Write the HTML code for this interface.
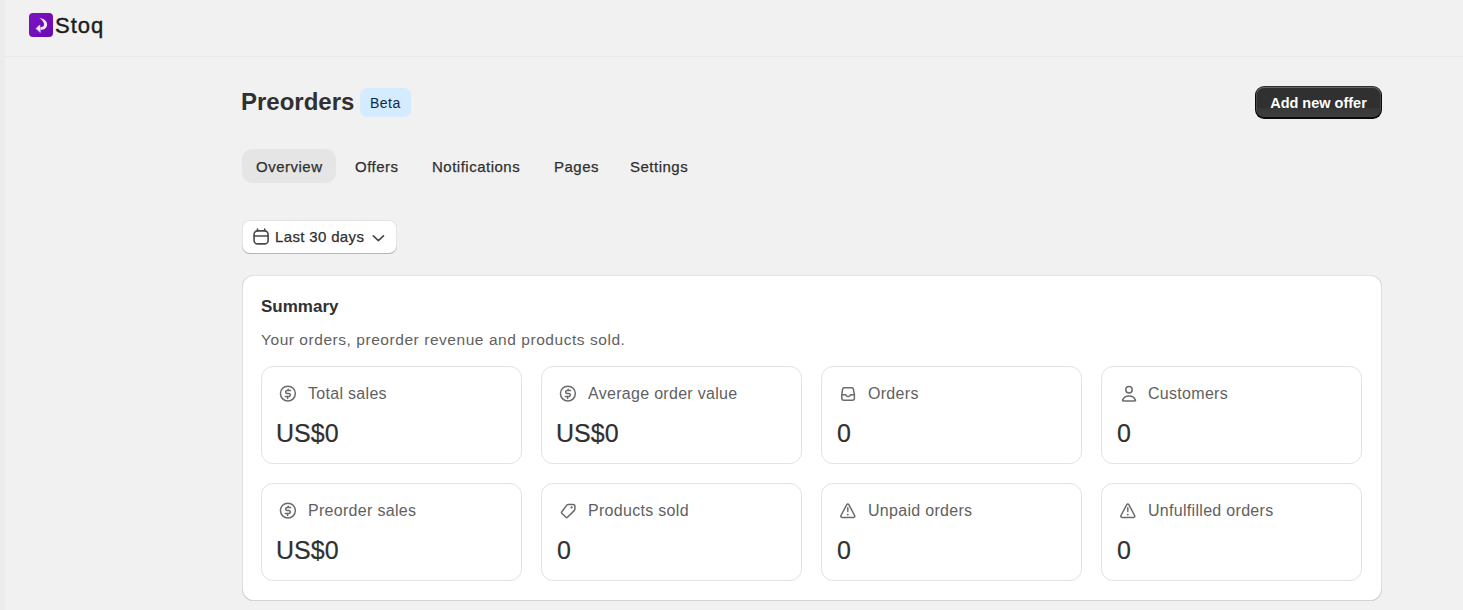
<!DOCTYPE html>
<html><head><meta charset="utf-8">
<style>
html,body{margin:0;padding:0;}
body{width:1463px;height:610px;overflow:hidden;background:#f1f1f1;position:relative;font-family:"Liberation Sans",sans-serif;color:#303030;}
.a{position:absolute;white-space:nowrap;line-height:1;}
#strip{position:absolute;left:0;top:0;width:5px;height:610px;background:#ececec;}
#sep{position:absolute;left:5px;top:56px;width:1458px;height:1px;background:#eaeaea;}
#logo{position:absolute;left:29px;top:13px;width:24px;height:24px;border-radius:4px;background:linear-gradient(135deg,#7c12c4,#6a0caf);}
#stoq{left:55px;top:15px;font-size:22px;letter-spacing:1px;color:#1c1c1c;-webkit-text-stroke:0.4px #1c1c1c;}
#title{left:241px;top:90px;font-size:24px;font-weight:bold;color:#303030;}
#beta{position:absolute;left:360px;top:88px;width:51px;height:29px;border-radius:7px;background:#d5ebff;}
#betat{left:370px;top:96px;font-size:14px;letter-spacing:0.5px;color:#0b2a45;}
#btn{position:absolute;left:1255px;top:86px;width:127px;height:33px;border-radius:9px;background:linear-gradient(180deg,rgba(255,255,255,0) 66%,rgba(255,255,255,.04) 69%,rgba(255,255,255,.08)),#303030;box-shadow:inset 0 -1px 0 1px rgba(0,0,0,.8),inset 0 0 0 1px #303030,inset 0 .5px 0 1.5px rgba(255,255,255,.25);}
#btnt{left:1255px;width:127px;text-align:center;top:96px;font-size:14.5px;font-weight:bold;color:#fff;}
#tabsel{position:absolute;left:242px;top:149px;width:94px;height:34px;border-radius:10px;background:#e5e5e5;}
.tab{top:159px;font-size:15px;letter-spacing:0.5px;color:#303030;-webkit-text-stroke:0.25px #303030;}
#date{position:absolute;left:242px;top:220px;width:155px;height:34px;border-radius:8px;background:#fff;box-shadow:inset 0 -1px 0 0 #b5b5b5,inset 0 0 0 1px rgba(0,0,0,.1);}
#datet{left:275px;top:229px;font-size:15px;letter-spacing:0.35px;color:#303030;-webkit-text-stroke:0.25px #303030;}
#card{position:absolute;left:242px;top:275px;width:1140px;height:326px;border-radius:12px;background:#fff;box-shadow:inset 0 1px 0 0 rgba(204,204,204,.5),inset 0 -1px 0 0 rgba(0,0,0,.17),inset -1px 0 0 0 rgba(0,0,0,.13),inset 1px 0 0 0 rgba(0,0,0,.13);}
#sum{left:261px;top:298px;font-size:17px;font-weight:bold;color:#303030;}
#desc{left:261px;top:332px;font-size:15.5px;letter-spacing:0.55px;color:#616161;}
.st{position:absolute;width:259px;height:96px;border:1px solid #e3e3e3;border-radius:12px;background:#fff;}
.lb{font-size:16px;letter-spacing:0.3px;color:#616161;}
.vl{font-size:25px;letter-spacing:0px;color:#303030;-webkit-text-stroke:0.2px #303030;}
svg{position:absolute;left:0;top:0;}
</style></head><body>
<div id="strip"></div>
<div id="sep"></div>
<div id="logo"></div>
<div class="a" id="stoq">Stoq</div>
<div class="a" id="title">Preorders</div>
<div id="beta"></div>
<div class="a" id="betat">Beta</div>
<div id="btn"></div>
<div class="a" id="btnt">Add new offer</div>
<div id="tabsel"></div>
<div class="a tab" style="left:256px">Overview</div>
<div class="a tab" style="left:355px">Offers</div>
<div class="a tab" style="left:432px">Notifications</div>
<div class="a tab" style="left:554px">Pages</div>
<div class="a tab" style="left:630px">Settings</div>
<div id="date"></div>
<div class="a" id="datet">Last 30 days</div>
<div id="card"></div>
<div class="a" id="sum">Summary</div>
<div class="a" id="desc">Your orders, preorder revenue and products sold.</div>

<div class="st" style="left:261px;top:366px"></div>
<div class="st" style="left:541px;top:366px"></div>
<div class="st" style="left:821px;top:366px"></div>
<div class="st" style="left:1101px;top:366px"></div>
<div class="st" style="left:261px;top:483px"></div>
<div class="st" style="left:541px;top:483px"></div>
<div class="st" style="left:821px;top:483px"></div>
<div class="st" style="left:1101px;top:483px"></div>

<div class="a lb" style="left:308px;top:386px">Total sales</div>
<div class="a lb" style="left:588px;top:386px">Average order value</div>
<div class="a lb" style="left:868px;top:386px">Orders</div>
<div class="a lb" style="left:1148px;top:386px">Customers</div>
<div class="a lb" style="left:308px;top:503px">Preorder sales</div>
<div class="a lb" style="left:588px;top:503px">Products sold</div>
<div class="a lb" style="left:868px;top:503px">Unpaid orders</div>
<div class="a lb" style="left:1148px;top:503px">Unfulfilled orders</div>

<div class="a vl" style="left:276px;top:421px">US$0</div>
<div class="a vl" style="left:556px;top:421px">US$0</div>
<div class="a vl" style="left:837px;top:421px">0</div>
<div class="a vl" style="left:1117px;top:421px">0</div>
<div class="a vl" style="left:276px;top:538px">US$0</div>
<div class="a vl" style="left:557px;top:538px">0</div>
<div class="a vl" style="left:837px;top:538px">0</div>
<div class="a vl" style="left:1117px;top:538px">0</div>

<svg width="1463" height="610" viewBox="0 0 1463 610" fill="none" stroke-linecap="round" stroke-linejoin="round">
<path d="M39.2 18.1 C43.6 18.4 47.1 21 47.1 24.6 C47.1 28.2 44 30 40.6 30 L40.3 27.3 C42.6 27.3 44.1 26.3 44.1 24.6 C44.1 22.2 42 19.6 39.2 18.1 Z" fill="#f4ecf8"/><path d="M36.2 28.5 L39.7 25 L40.3 32.1 Z" fill="#f4ecf8" stroke="#f4ecf8" stroke-width="0.6"/>
<g stroke="#4a4a4a" stroke-width="1.6"><rect x="254.1" y="230.9" width="14" height="13" rx="3.5"/><path d="M254.1 236 H268.1 M257.5 229.1 V230.7 M264.7 229.1 V230.7"/><path d="M373.3 235.8 L378.4 240.6 L383.5 235.8"/></g>
<g stroke="#6b6b6b" stroke-width="1.5">
<circle cx="287.9" cy="393.6" r="7.45"/><path d="M290.6 390.5 H287.2 a1.55 1.55 0 0 0 0 3.1 H288.8 a1.5 1.5 0 0 1 0 3 H285.4 M288.2 389.3 V390.5 M287.6 396.6 V398.4"/><circle cx="567.9" cy="393.6" r="7.45"/><path d="M570.6 390.5 H567.2 a1.55 1.55 0 0 0 0 3.1 H568.8 a1.5 1.5 0 0 1 0 3 H565.4 M568.2 389.3 V390.5 M567.6 396.6 V398.4"/><circle cx="287.9" cy="510.6" r="7.45"/><path d="M290.6 507.5 H287.2 a1.55 1.55 0 0 0 0 3.1 H288.8 a1.5 1.5 0 0 1 0 3 H285.4 M288.2 506.3 V507.5 M287.6 513.6 V515.4"/>
<path d="M844.2 387.7 H851.8 a1.6 1.6 0 0 1 1.6 1.4 L854.4 394.8 V398.2 a2 2 0 0 1 -2 2 H843.8 a2 2 0 0 1 -2 -2 V394.8 L842.6 389.1 a1.6 1.6 0 0 1 1.6 -1.4 Z"/><path d="M841.8 394.8 H845 Q846 394.8 846.4 395.6 Q847 396.6 848.1 396.6 Q849.2 396.6 849.8 395.6 Q850.2 394.8 851.2 394.8 H854.4"/><circle cx="1129" cy="389.7" r="3.2"/><path d="M1123.3 401.1 H1134.7 a0.8 0.8 0 0 0 0.7 -1.2 C1134.3 397.4 1131.9 396 1129 396 C1126.1 396 1123.7 397.4 1122.6 399.9 a0.8 0.8 0 0 0 0.7 1.2 Z"/><path d="M568.2 504.5 H573.2 Q574.9 504.5 574.9 506.2 V509.3 Q574.9 509.9 574.4 510.4 L567.5 517.3 Q566.7 518 565.9 517.3 L561.8 513.3 Q561.1 512.5 561.8 511.7 L566.9 505.1 Q567.4 504.5 568.2 504.5 Z"/><circle cx="571.6" cy="507.4" r="1.15" fill="#6b6b6b" stroke="none"/><path d="M846.5 505.1 Q847.8 503.1 849.1 505.1 L854.6 515.5 Q855.3 517.4 853.4 517.4 H842.2 Q840.3 517.4 841.0 515.5 Z M847.8 507.7 V511.6"/><circle cx="847.8" cy="514.6" r="0.95" fill="#6b6b6b" stroke="none"/><path d="M1126.5 505.1 Q1127.8 503.1 1129.1 505.1 L1134.6 515.5 Q1135.3 517.4 1133.4 517.4 H1122.2 Q1120.3 517.4 1121.0 515.5 Z M1127.8 507.7 V511.6"/><circle cx="1127.8" cy="514.6" r="0.95" fill="#6b6b6b" stroke="none"/>
</g>
</svg>
</body></html>
